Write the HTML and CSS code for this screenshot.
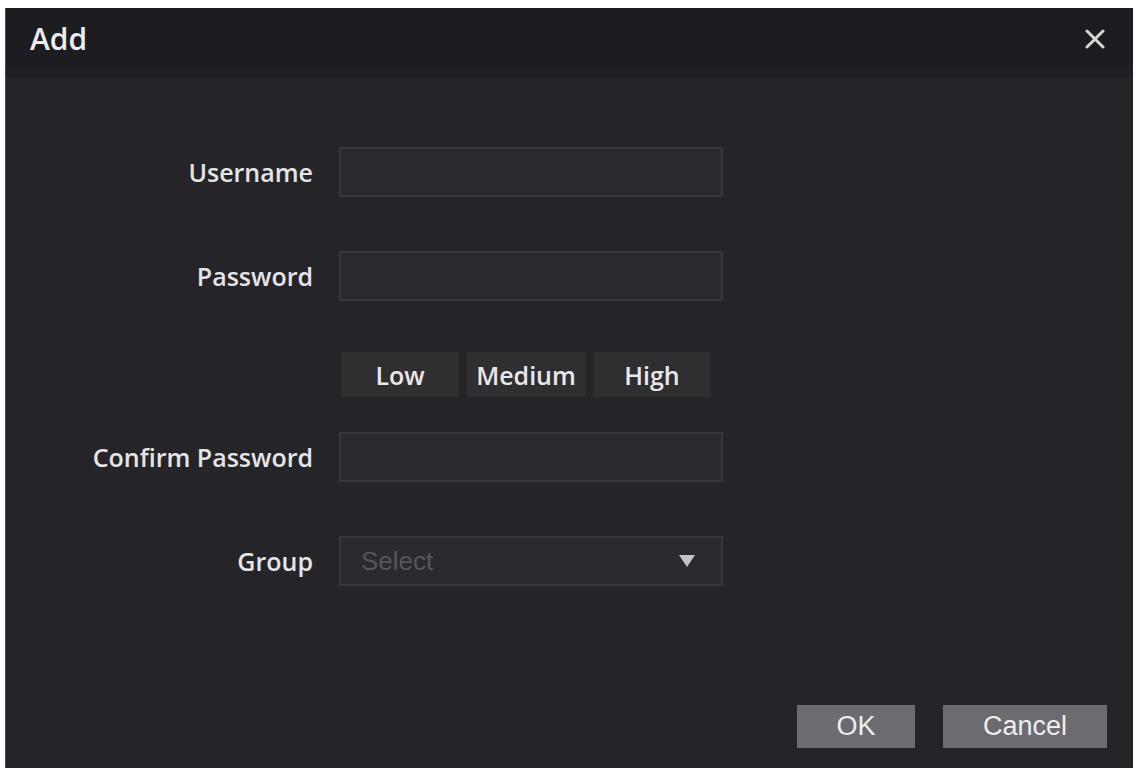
FILE: index.html
```html
<!DOCTYPE html>
<html lang="en">
<head>
  <meta charset="UTF-8">
  <meta name="viewport" content="width=device-width, initial-scale=1.0">
  <title>Add User</title>
  <link rel="stylesheet" href="styles.css">
</head>
<body>
  <div class="dialog">
    <div class="dialog-header">
      <h1 class="dialog-title">Add</h1>
      <button class="close-btn" aria-label="Close">
        <svg width="20" height="20" viewBox="0 0 20 20">
          <path d="M2 2 L18 18 M18 2 L2 18" stroke="#d6d6d6" stroke-width="3" stroke-linecap="round"/>
        </svg>
      </button>
    </div>

    <div class="dialog-body">
      <form class="user-form">
        <div class="form-row">
          <label class="form-label" for="username">Username</label>
          <input class="form-input" id="username" type="text">
        </div>
        <div class="form-row">
          <label class="form-label" for="password">Password</label>
          <input class="form-input" id="password" type="password">
        </div>
        <div class="form-row strength-row">
          <span class="form-label"></span>
          <div class="strength">
            <span class="strength-item">Low</span>
            <span class="strength-item">Medium</span>
            <span class="strength-item">High</span>
          </div>
        </div>
        <div class="form-row">
          <label class="form-label" for="confirm">Confirm Password</label>
          <input class="form-input" id="confirm" type="password">
        </div>
        <div class="form-row">
          <label class="form-label">Group</label>
          <div class="form-select">
            <span class="select-placeholder">Select</span>
            <svg class="select-arrow" width="16" height="12" viewBox="0 0 16 12">
              <path d="M0 0 L16 0 L8 12 Z" fill="#c4c4c8"/>
            </svg>
          </div>
        </div>
      </form>
    </div>

    <div class="dialog-footer">
      <button class="footer-btn ok-btn">OK</button>
      <button class="footer-btn cancel-btn">Cancel</button>
    </div>
  </div>
</body>
</html>
```

FILE: styles.css
```css
html, body {
  margin: 0;
  padding: 0;
  background: #ffffff;
  overflow: hidden;
}

body {
  padding: 8px 7px 0 5px;
  height: 768px;
  box-sizing: border-box;
}

.dialog {
  height: 760px;
  background-color: #252429;
  border-left: 1px solid #47464b;
  display: flex;
  flex-direction: column;
  font-family: 'Open Sans', sans-serif;
  color: #e6e6e8;
}

.dialog-header {
  height: 70px;
  background: linear-gradient(to bottom, #1d1c20 0%, #1d1c20 78%, #222125 100%);
  display: flex;
  justify-content: space-between;
  align-items: flex-start;
  padding: 0 28px 0 24px;
}

.dialog-title {
  margin: 10px 0 0;
  font-size: 30px;
  font-weight: 600;
  color: #ececee;
}

.close-btn {
  margin-top: 21px;
  background: none;
  border: none;
  padding: 0;
  cursor: pointer;
}

.dialog-body {
  flex: 1;
  padding-top: 69px;
}

.user-form {
  display: flex;
  flex-direction: column;
  gap: 54px;
}

.form-row {
  display: flex;
  align-items: center;
  gap: 26px;
}

.form-label {
  width: 307px;
  text-align: right;
  font-size: 25px;
  font-weight: 600;
  color: #e4e4e6;
}

.form-input,
.form-select {
  width: 384px;
  height: 50px;
  box-sizing: border-box;
  background-color: #2b2a2f;
  border: 2px solid #38373d;
  outline: none;
}

.strength-row {
  margin-top: -3px;
  margin-bottom: -19px;
}

.strength {
  display: flex;
  gap: 8px;
  padding-left: 2px;
}

.strength-item {
  width: 118px;
  height: 45px;
  background-color: #2f2f32;
  display: flex;
  align-items: center;
  justify-content: center;
  font-size: 25px;
  font-weight: 600;
  color: #e8e8ea;
}

.form-select {
  display: flex;
  align-items: center;
  justify-content: space-between;
  padding: 0 26px 0 20px;
}

.select-placeholder {
  font-family: 'Liberation Sans', Arial, sans-serif;
  font-size: 26px;
  color: #56555b;
}

.dialog-footer {
  display: flex;
  justify-content: flex-end;
  gap: 28px;
  padding: 0 26px 20px 0;
}

.footer-btn {
  height: 43px;
  background-color: #6c6b6f;
  border: none;
  font-family: 'Liberation Sans', Arial, sans-serif;
  font-size: 27px;
  color: #eeeeee;
  cursor: pointer;
}

.ok-btn { width: 118px; }
.cancel-btn { width: 164px; }
```
